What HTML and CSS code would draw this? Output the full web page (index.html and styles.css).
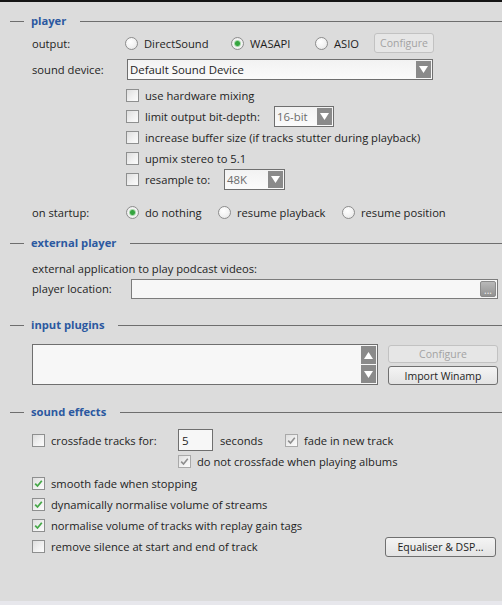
FILE: index.html
```html
<!DOCTYPE html>
<html>
<head>
<meta charset="utf-8">
<link rel="stylesheet" href="styles.css">
</head>
<body>
<div class="panel">
  <div class="hdr hdr-player"><span class="hdr-text">player</span></div>
  <div class="row r-output">
    <span class="lbl">output:</span>
    <span class="opt w-ds"><span class="radio"></span>DirectSound</span>
    <span class="opt w-wa"><span class="radio on"></span>WASAPI</span>
    <span class="opt w-as"><span class="radio"></span>ASIO</span>
    <span class="btn btn-dis btn-cfg">Configure</span>
  </div>
  <div class="row r-device">
    <span class="lbl">sound device:</span>
    <span class="select sel-device"><span class="sel-text">Default Sound Device</span><span class="arrow"><svg width="9" height="7" viewBox="0 0 9 7"><path d="M0 0H9L4.5 7Z" fill="#fff"/></svg></span></span>
  </div>
  <div class="checks">
    <div class="crow"><span class="cb"></span><span>use hardware mixing</span></div>
    <div class="crow"><span class="cb"></span><span class="t-bit">limit output bit-depth:</span><span class="select sel-bit"><span class="sel-text dim">16-bit</span><span class="arrow"><svg width="9" height="7" viewBox="0 0 9 7"><path d="M0 0H9L4.5 7Z" fill="#fff"/></svg></span></span></div>
    <div class="crow"><span class="cb"></span><span>increase buffer size (if tracks stutter during playback)</span></div>
    <div class="crow"><span class="cb"></span><span>upmix stereo to 5.1</span></div>
    <div class="crow"><span class="cb"></span><span class="t-res">resample to:</span><span class="select sel-res"><span class="sel-text dim">48K</span><span class="arrow"><svg width="9" height="7" viewBox="0 0 9 7"><path d="M0 0H9L4.5 7Z" fill="#fff"/></svg></span></span></div>
  </div>
  <div class="row r-startup">
    <span class="lbl lbl-startup">on startup:</span>
    <span class="opt w-dn"><span class="radio on"></span>do nothing</span>
    <span class="opt w-rp"><span class="radio"></span>resume playback</span>
    <span class="opt"><span class="radio"></span>resume position</span>
  </div>

  <div class="hdr hdr-ext"><span class="hdr-text">external player</span></div>
  <div class="row r-text">external application to play podcast videos:</div>
  <div class="row r-loc">
    <span class="lbl lbl-loc">player location:</span>
    <span class="field field-loc"><span class="dots">...</span></span>
  </div>

  <div class="hdr hdr-input"><span class="hdr-text">input plugins</span></div>
  <div class="row r-plugins">
    <div class="listbox">
      <div class="scroll">
        <span class="sbtn"><svg width="9" height="7" viewBox="0 0 9 7"><path d="M0 7H9L4.5 0Z" fill="#fff"/></svg></span>
        <span class="sbtn"><svg width="9" height="7" viewBox="0 0 9 7"><path d="M0 0H9L4.5 7Z" fill="#fff"/></svg></span>
      </div>
    </div>
    <div class="pbtns">
      <span class="btn btn-dis btn-pcfg">Configure</span>
      <span class="btn btn-imp">Import Winamp</span>
    </div>
  </div>

  <div class="hdr hdr-fx"><span class="hdr-text">sound effects</span></div>
  <div class="row r-cross">
    <span class="cb"></span><span class="t-cf">crossfade tracks for:</span>
    <span class="field num">5</span>
    <span class="t-sec">seconds</span>
    <span class="cb dis"><svg width="11" height="11" viewBox="0 0 11 11"><path d="M2.2 5.6L4.5 8L8.8 2.8" fill="none" stroke="#8e8e8e" stroke-width="1.6"/></svg></span><span>fade in new track</span>
  </div>
  <div class="row r-nocross">
    <span class="cb dis"><svg width="11" height="11" viewBox="0 0 11 11"><path d="M2.2 5.6L4.5 8L8.8 2.8" fill="none" stroke="#8e8e8e" stroke-width="1.6"/></svg></span><span>do not crossfade when playing albums</span>
  </div>
  <div class="row r-fx r-fx1">
    <span class="cb"><svg width="11" height="11" viewBox="0 0 11 11"><path d="M2.2 5.6L4.5 8L8.8 2.8" fill="none" stroke="#46a848" stroke-width="1.8"/></svg></span><span>smooth fade when stopping</span>
  </div>
  <div class="row r-fx">
    <span class="cb"><svg width="11" height="11" viewBox="0 0 11 11"><path d="M2.2 5.6L4.5 8L8.8 2.8" fill="none" stroke="#46a848" stroke-width="1.8"/></svg></span><span>dynamically normalise volume of streams</span>
  </div>
  <div class="row r-fx">
    <span class="cb"><svg width="11" height="11" viewBox="0 0 11 11"><path d="M2.2 5.6L4.5 8L8.8 2.8" fill="none" stroke="#46a848" stroke-width="1.8"/></svg></span><span>normalise volume of tracks with replay gain tags</span>
  </div>
  <div class="row r-fx">
    <span class="cb"></span><span>remove silence at start and end of track</span>
    <span class="btn btn-eq">Equaliser &amp; DSP...</span>
  </div>
</div>
</body>
</html>
```

FILE: styles.css
```css
* { box-sizing: border-box; }
html, body { margin: 0; padding: 0; }
body {
  background: #e7e7ec;
  font-family: "Open Sans", "Noto Sans", sans-serif;
  font-size: 11.2px;
  color: #1e1e1e;
}
.panel {
  height: 601px;
  background: #dcdcdc;
  border-top: 2px solid #151515;
  padding-top: 8px;
  overflow: hidden;
}

/* section headers */
.hdr {
  display: flex;
  align-items: center;
  height: 20px;
  padding-left: 10px;
}
.hdr::before {
  content: "";
  width: 14px;
  height: 1px;
  background: #6e6e6e;
  margin-right: 7px;
  margin-top: 2px;
}
.hdr::after {
  content: "";
  flex: 1;
  height: 1px;
  background: #6e6e6e;
  margin-left: 14px;
  margin-top: 2px;
}
.hdr-text { color: #2b58a0; font-weight: bold; }
.hdr-ext { margin-top: 9px; }
.hdr-input { margin-top: 15px; }
.hdr-fx { margin-top: 16px; }

/* rows */
.row {
  display: flex;
  align-items: center;
  padding-left: 32px;
  white-space: nowrap;
}
.lbl { width: 93px; flex: none; }
.lbl-startup { width: 94px; }
.lbl-loc { width: 99px; }

.r-output { height: 22px; margin-top: 2px; }
.r-device { height: 22px; margin-top: 4px; }
.r-startup { height: 22px; margin-top: 11px; }
.r-text { height: 20px; margin-top: 6px; }
.r-loc { height: 21px; }
.r-plugins { margin-top: 10px; align-items: flex-start; }
.r-cross { height: 22px; margin-top: 8px; }
.r-nocross { height: 21px; padding-left: 178px; }
.r-fx { height: 21px; }
.r-fx1 { margin-top: 1px; }

/* radio options */
.opt { display: flex; align-items: center; flex: none; }
.w-ds { width: 106px; }
.w-wa { width: 84px; }
.w-as { width: 59px; }
.w-dn { width: 92px; }
.w-rp { width: 124px; }
.radio {
  width: 13px;
  height: 13px;
  border-radius: 50%;
  border: 1px solid #8d8d8d;
  background: radial-gradient(circle at 40% 35%, #ffffff 0, #f3f3f3 50%, #e0e0e0 100%);
  margin-right: 6px;
  flex: none;
}
.radio.on {
  background: radial-gradient(circle at 50% 50%, #35a53f 0, #35a53f 2px, #a8d8ab 3px, #f3f3f3 4px, #e4e4e4 100%);
}

/* checkboxes */
.checks { margin-top: 5px; padding-left: 126px; }
.crow { height: 21px; display: flex; align-items: center; white-space: nowrap; }
.cb {
  width: 13px;
  height: 13px;
  border: 1px solid #8e8f8f;
  background: linear-gradient(135deg, #dedede 0%, #f2f2f2 60%, #fbfbfb 100%);
  margin-right: 6px;
  flex: none;
  display: flex;
  align-items: center;
  justify-content: center;
}
.cb.dis { border-color: #a9a9a9; }
.cb svg { display: block; }
.t-bit { width: 129px; flex: none; }
.t-res { width: 79px; flex: none; }
.t-cf { width: 127px; flex: none; }
.t-sec { width: 65px; margin-left: 7px; flex: none; }

/* selects */
.select {
  display: flex;
  align-items: center;
  height: 21px;
  border: 1px solid #6f6f6f;
  background: linear-gradient(#f2f2f2, #fbfbfb);
  padding: 1px;
  flex: none;
}
.sel-text { flex: 1; padding-left: 1px; font-size: 11.4px; }
.sel-text.dim { color: #6c6c6c; }
.arrow {
  width: 15px;
  height: 17px;
  background: #8a8a8a;
  display: flex;
  align-items: center;
  justify-content: center;
  flex: none;
}
.arrow svg { display: block; }
.sel-device { width: 306px; margin-left: 2px; }
.sel-bit { width: 60px; }
.sel-res { width: 61px; }

/* fields */
.field {
  display: flex;
  align-items: center;
  border: 1px solid #7c7c7c;
  background: #f7f7f7;
  flex: none;
}
.field-loc {
  width: 367px;
  height: 20px;
  justify-content: flex-end;
  padding-right: 1px;
}
.dots {
  width: 16px;
  height: 16px;
  background: linear-gradient(#b8b8b8, #929292);
  border: 1px solid #8a8a8a;
  border-radius: 2px;
  color: #f2f2f2;
  font-size: 10px;
  line-height: 16px;
  text-align: center;
}
.num {
  width: 35px;
  height: 22px;
  border-color: #6f6f6f;
  padding-left: 3px;
  font-size: 11.5px;
}

/* buttons */
.btn {
  display: flex;
  align-items: center;
  justify-content: center;
  border: 1px solid #707070;
  border-radius: 3px;
  background: linear-gradient(#f4f4f4, #e3e3e3);
  font-size: 10.5px;
  color: #1e1e1e;
  flex: none;
}
.btn-dis {
  border-color: #c2c2c2;
  background: #e6e6e6;
  color: #a3a3a3;
}
.btn-cfg { width: 60px; height: 20px; }
.btn-eq { width: 111px; height: 20px; margin-left: auto; margin-right: 6px; }

/* plugins */
.listbox {
  width: 346px;
  height: 41px;
  border: 1px solid #6f6f6f;
  background: #f7f7f7;
  display: flex;
  justify-content: flex-end;
  padding: 1px;
  flex: none;
}
.scroll {
  width: 15px;
  display: flex;
  flex-direction: column;
  gap: 1px;
}
.sbtn {
  flex: 1;
  background: #8a8a8a;
  display: flex;
  align-items: center;
  justify-content: center;
}
.sbtn svg { display: block; }
.pbtns {
  margin-left: 10px;
  width: 110px;
  display: flex;
  flex-direction: column;
}
.btn-pcfg { height: 18px; margin-top: 1px; }
.btn-imp { height: 19px; margin-top: 3px; }
```
